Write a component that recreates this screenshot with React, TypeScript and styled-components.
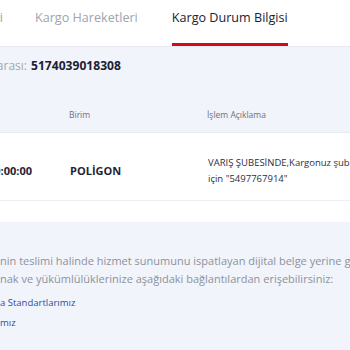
import React from "react";
import styled, { createGlobalStyle } from "styled-components";

const Global = createGlobalStyle`
  html, body { margin: 0; padding: 0; }
  body {
    width: 350px;
    height: 350px;
    overflow: hidden;
    background: #f1f4fa;
    font-family: "Open Sans", Inter, "Liberation Sans", sans-serif;
  }
`;

const Page = styled.div`
  width: 350px;
  height: 350px;
  overflow: hidden;
  display: flex;
  flex-direction: column;
  background: #f1f4fa;
`;

const TabBar = styled.div`
  height: 47px;
  box-sizing: border-box;
  background: #ffffff;
  border-bottom: 1px solid #e7eaf0;
  display: flex;
  align-items: flex-start;
`;

const Tab = styled.div<{ $active?: boolean; $gap?: number }>`
  box-sizing: border-box;
  height: 46px;
  padding-top: 9px;
  line-height: 18px;
  font-size: 12.6px;
  font-weight: 500;
  white-space: nowrap;
  color: ${(p) => (p.$active ? "#1c2232" : "#a0a4ad")};
  border-bottom: 3px solid ${(p) => (p.$active ? "#cf0a1f" : "transparent")};
  margin-right: ${(p) => p.$gap ?? 0}px;
`;

const Clip = styled.div<{ $width: number }>`
  width: ${(p) => p.$width}px;
  overflow: hidden;
  display: flex;
  justify-content: flex-end;
  white-space: nowrap;
  flex-shrink: 0;
`;

const InfoRow = styled.div`
  height: 48px;
  box-sizing: border-box;
  padding-top: 9px;
  display: flex;
  align-items: flex-start;
  line-height: 20px;
  white-space: nowrap;
`;

const InfoLabel = styled.span`
  font-size: 12px;
  color: #a3a8b2;
  margin-right: 4px;
`;

const InfoValue = styled.span`
  font-size: 12.1px;
  font-weight: 700;
  color: #1c2232;
`;

const HeaderRow = styled.div`
  height: 38px;
  box-sizing: border-box;
  border-bottom: 1px solid #e6e9ef;
  display: grid;
  grid-template-columns: 69px 138px 1fr;
  align-items: center;
  padding-top: 1px;
`;

const HeadCell = styled.div`
  font-size: 8.5px;
  color: #6d7280;
  white-space: nowrap;
  overflow: hidden;
`;

const DataRow = styled.div`
  height: 68px;
  box-sizing: border-box;
  background: #ffffff;
  border-bottom: 1px solid #eceef3;
  display: grid;
  grid-template-columns: 70px 138px 1fr;
  align-items: center;
  padding-top: 9px;
`;

const Cell = styled.div<{ $bold?: boolean }>`
  min-width: 0;
  font-size: ${(p) => (p.$bold ? "11px" : "9.5px")};
  font-weight: ${(p) => (p.$bold ? 700 : 400)};
  color: ${(p) => (p.$bold ? "#1f2535" : "#2a3040")};
  line-height: 16px;
  white-space: nowrap;
  overflow: hidden;
`;

const Spacer = styled.div`
  height: 21px;
  background: #ffffff;
`;

const Notice = styled.div`
  padding-top: 30px;
  display: flex;
  flex-direction: column;
`;

const NoticeLine = styled.div`
  font-size: 11px;
  line-height: 18px;
  color: #8d929d;
  white-space: nowrap;
`;

const Links = styled.div`
  margin-top: 5px;
  display: flex;
  flex-direction: column;
`;

const LinkItem = styled.a`
  font-size: 9.5px;
  line-height: 20px;
  color: #2d4c9b;
  text-decoration: none;
  white-space: nowrap;
`;

export default function App() {
  return (
    <Page>
      <Global />
      <TabBar>
        <Clip $width={3}>
          <Tab>Gönderi Bilgileri</Tab>
        </Clip>
        <Clip $width={32}>
          <span />
        </Clip>
        <Tab $gap={34}>Kargo Hareketleri</Tab>
        <Tab $active>Kargo Durum Bilgisi</Tab>
      </TabBar>

      <InfoRow>
        <Clip $width={31}>
          <InfoLabel>Gönderi Takip Numarası:</InfoLabel>
        </Clip>
        <InfoValue>5174039018308</InfoValue>
      </InfoRow>

      <HeaderRow>
        <HeadCell />
        <HeadCell>Birim</HeadCell>
        <HeadCell>İşlem Açıklama</HeadCell>
      </HeaderRow>

      <DataRow>
        <Cell $bold>
          <Clip $width={32}>
            <span>21.03.2024 00:00:00</span>
          </Clip>
        </Cell>
        <Cell $bold>POLİGON</Cell>
        <Cell>
          <div>VARIŞ ŞUBESİNDE,Kargonuz şubemizde teslim</div>
          <div>için "5497767914"</div>
        </Cell>
      </DataRow>

      <Spacer />

      <Notice>
        <NoticeLine>nin teslimi halinde hizmet sunumunu ispatlayan dijital belge yerine getirilir</NoticeLine>
        <NoticeLine>nak ve yükümlülüklerinize aşağıdaki bağlantılardan erişebilirsiniz:</NoticeLine>
        <Links>
          <LinkItem href="#">a Standartlarımız</LinkItem>
          <LinkItem href="#">mız</LinkItem>
        </Links>
      </Notice>
    </Page>
  );
}
